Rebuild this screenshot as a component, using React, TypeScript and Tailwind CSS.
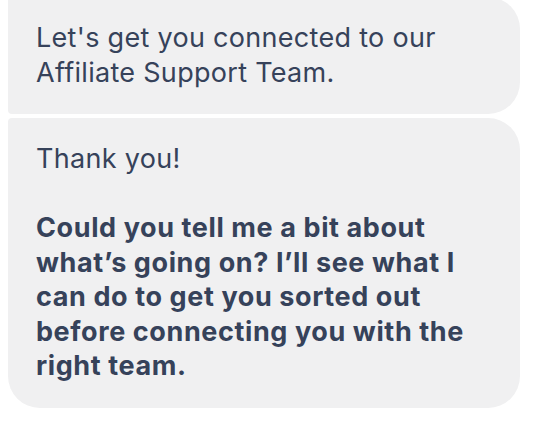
import React from "react";

export default function App() {
  return (
    <div
      className="w-[550px] h-[436px] bg-white overflow-hidden"
      style={{ fontFamily: "Inter, 'Noto Sans', sans-serif" }}
    >
      <div className="flex flex-col gap-[4px] pl-[8px] -mt-[3px]">
        <div className="w-[512px] bg-[#f0f0f1] rounded-l-[4px] rounded-r-[32px] px-[28px] py-[24px] text-[27px] leading-[34.5px] tracking-[0.3px] text-[#36425a]">
          Let's get you connected to our Affiliate Support Team.
        </div>
        <div className="w-[512px] bg-[#f0f0f1] rounded-tl-[4px] rounded-tr-[32px] rounded-b-[32px] px-[28px] py-[24px] text-[27px] leading-[34.5px] tracking-[0.3px] text-[#36425a]">
          <p>Thank you!</p>
          <p className="h-[34.5px]"></p>
          <p className="font-bold tracking-[0.6px]">
            Could you tell me a bit about what’s going on? I’ll see what I can do to get you sorted out before connecting you with the right team.
          </p>
        </div>
      </div>
    </div>
  );
}
